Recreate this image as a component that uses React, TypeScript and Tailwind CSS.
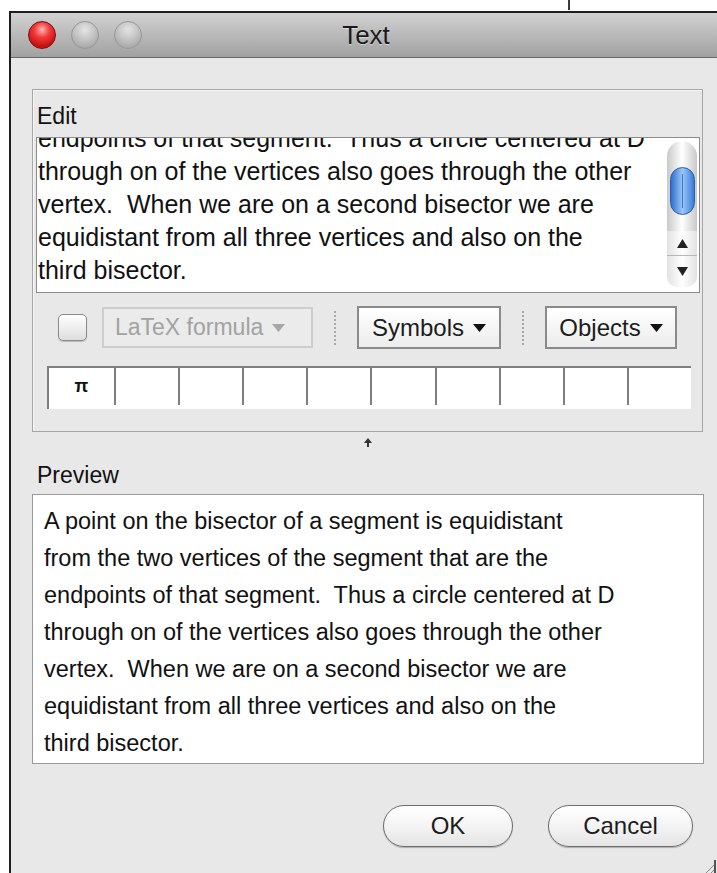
import React from 'react';

const editLines = [
  'endpoints of that segment.  Thus a circle centered at D',
  'through on of the vertices also goes through the other',
  'vertex.  When we are on a second bisector we are',
  'equidistant from all three vertices and also on the',
  'third bisector.',
];

const previewLines = [
  'A point on the bisector of a segment is equidistant',
  'from the two vertices of the segment that are the',
  'endpoints of that segment.  Thus a circle centered at D',
  'through on of the vertices also goes through the other',
  'vertex.  When we are on a second bisector we are',
  'equidistant from all three vertices and also on the',
  'third bisector.',
];

const Light: React.FC<{ red?: boolean }> = ({ red }) => (
  <div
    className={
      red
        ? 'h-[28px] w-[28px] rounded-full border border-[#7a0f0f] bg-[radial-gradient(circle_at_50%_30%,#ffb4b4_0%,#f23a3a_35%,#c40f0f_75%,#e23030_100%)]'
        : 'h-[28px] w-[28px] rounded-full border border-[#979797] bg-[radial-gradient(circle_at_50%_30%,#e4e4e4_0%,#c4c4c4_45%,#a9a9a9_80%,#c0c0c0_100%)]'
    }
  />
);

const Caret: React.FC<{ gray?: boolean }> = ({ gray }) => (
  <svg width="13" height="8" viewBox="0 0 13 8" className="ml-[9px]">
    <path d="M0 0h13L6.5 8z" fill={gray ? '#a6a6a6' : '#111'} />
  </svg>
);

const Separator: React.FC = () => (
  <div className="mx-[21px] h-[34px] w-0 border-l-2 border-dotted border-[#a9a9a9]" />
);

const MenuButton: React.FC<{ label: string; width: string }> = ({ label, width }) => (
  <div
    className={`flex h-[43px] ${width} items-center justify-center border-2 border-[#8a8a8a] bg-gradient-to-b from-white to-[#ececec] text-[24px] text-[#1c1c1c]`}
  >
    {label}
    <Caret />
  </div>
);

const ScrollBar: React.FC = () => (
  <div className="mr-[2px] mt-[3px] flex w-[30px] flex-col">
    {/* track with the blue aqua thumb */}
    <div className="flex h-[90px] flex-col items-center rounded-t-full bg-gradient-to-r from-[#c9c9c9] via-white to-[#c9c9c9] pt-[26px]">
      <div className="relative h-[48px] w-[25px] rounded-full border border-[#2c5ea8] bg-gradient-to-r from-[#2f6fd0] via-[#9bc7f7] to-[#3a7ad8]">
        <div className="absolute left-1/2 top-[6px] h-[34px] w-px bg-[#3f79c9]" />
      </div>
    </div>
    <div className="flex h-[25px] items-center justify-center border-b border-[#b8b8b8] bg-gradient-to-r from-[#e2e2e2] via-white to-[#e2e2e2]">
      <svg width="11" height="9" viewBox="0 0 11 9">
        <path d="M5.5 0L11 9H0z" fill="#222" />
      </svg>
    </div>
    <div className="flex h-[31px] items-center justify-center rounded-b-[10px] bg-gradient-to-r from-[#e2e2e2] via-white to-[#e2e2e2]">
      <svg width="11" height="9" viewBox="0 0 11 9">
        <path d="M0 0h11L5.5 9z" fill="#222" />
      </svg>
    </div>
  </div>
);

const PillButton: React.FC<{ label: string; width: string }> = ({ label, width }) => (
  <div
    className={`flex h-[42px] ${width} items-center justify-center rounded-full border-[1.5px] border-[#6e6e6e] bg-gradient-to-b from-white via-[#f4f4f4] to-[#e4e4e4] text-[24px] text-[#1c1c1c] shadow-[0_1px_1px_rgba(0,0,0,0.25)]`}
  >
    {label}
  </div>
);

export default function App() {
  return (
    <div className="relative h-[873px] w-[717px] overflow-hidden bg-white font-['Liberation_Sans',Arial,sans-serif]">
      <div className="absolute left-[568px] top-0 h-[10px] w-[2px] bg-[#3a3a3a]" />

      <div className="ml-[9px] mt-[11px] flex h-[862px] w-[712px] flex-col border-l-2 border-t-2 border-[#1e1e1e]">
        {/* title bar */}
        <div className="relative flex h-[45px] shrink-0 items-center border-b border-[#686868] bg-gradient-to-b from-[#d2d2d2] to-[#a1a1a1]">
          <div className="ml-[17px] flex gap-[15px]">
            <Light red />
            <Light />
            <Light />
          </div>
          <div className="absolute inset-x-0 top-0 flex h-full items-center justify-center text-[26px] text-[#1a1a1a] [text-shadow:0_1px_0_rgba(255,255,255,0.45)]">
            Text
          </div>
        </div>

        {/* dialog body */}
        <div className="flex-1 bg-[#e8e8e8] pl-[21px] pt-[31px]">
          <div className="h-[343px] w-[671px] border border-[#a6a6a6] shadow-[inset_1px_1px_0_#f6f6f6]">
            <div className="flex h-[47px] items-center pl-[4px] pt-[4px] text-[23px] leading-[28px] text-[#111]">Edit</div>

            <div className="ml-[3px] flex h-[156px] w-[664px] border border-[#8c8c8c] bg-white">
              <div className="flex-1 overflow-hidden pl-[1px]">
                <div className="-mt-[16px] text-[25px] leading-[33px] text-[#111]">
                  {editLines.map((l, i) => (
                    <div key={i} className="whitespace-pre">{l}</div>
                  ))}
                </div>
              </div>
              <ScrollBar />
            </div>

            {/* formula toolbar */}
            <div className="mt-[13px] flex items-center pl-[25px]">
              <div className="h-[27px] w-[29px] rounded-[5px] border border-[#8a8a8a] bg-gradient-to-b from-white to-[#dedede] shadow-[0_1px_1px_rgba(0,0,0,0.2)]" />
              <div className="ml-[15px] flex h-[41px] w-[211px] items-center border-2 border-[#cdcdcd] bg-[#ebebeb] pl-[11px] text-[23px] text-[#a2a2a2]">
                LaTeX formula
                <Caret gray />
              </div>
              <Separator />
              <MenuButton label="Symbols" width="w-[144px]" />
              <Separator />
              <MenuButton label="Objects" width="w-[132px]" />
            </div>

            {/* symbol table */}
            <div className="ml-[14px] mt-[17px] flex h-[43px] w-[644px] border-l-2 border-t-2 border-[#7e7e7e] bg-white">
              {Array.from({ length: 10 }).map((_, i) => (
                <div
                  key={i}
                  className={`flex h-[37px] items-center justify-center ${i === 0 ? 'w-[67px]' : 'flex-1'} ${i < 9 ? 'border-r-2 border-[#7e7e7e]' : ''}`}
                >
                  {i === 0 && <span className="text-[18px] font-bold text-[#111]">π</span>}
                </div>
              ))}
            </div>
          </div>

          {/* splitter handle */}
          <div className="flex h-[20px] w-[671px] items-center justify-center">
            <svg width="8" height="9" viewBox="0 0 8 9">
              <path d="M4 0L8 5H5v4H3V5H0z" fill="#333" />
            </svg>
          </div>

          <div className="flex h-[42px] items-center pl-[5px] pt-[4px] text-[23px] leading-[28px] text-[#111]">Preview</div>

          <div className="h-[270px] w-[672px] border border-[#9a9a9a] bg-white pl-[11px] pt-[8px] text-[23.5px] leading-[37px] text-[#111]">
            {previewLines.map((l, i) => (
              <div key={i} className="whitespace-pre">{l}</div>
            ))}
          </div>

          <div className="mt-[41px] flex w-[672px] justify-end gap-[35px] pr-[11px]">
            <PillButton label="OK" width="w-[130px]" />
            <PillButton label="Cancel" width="w-[145px]" />
          </div>
        </div>
      </div>

      {/* resize grip */}
      <svg className="absolute bottom-0 right-0" width="14" height="16" viewBox="0 0 14 16">
        <path d="M3 16L11 8M8 16L11 13" stroke="#8a8a8a" strokeWidth="1" />
        <path d="M12 3V16" stroke="#222" strokeWidth="1.5" />
      </svg>
    </div>
  );
}
